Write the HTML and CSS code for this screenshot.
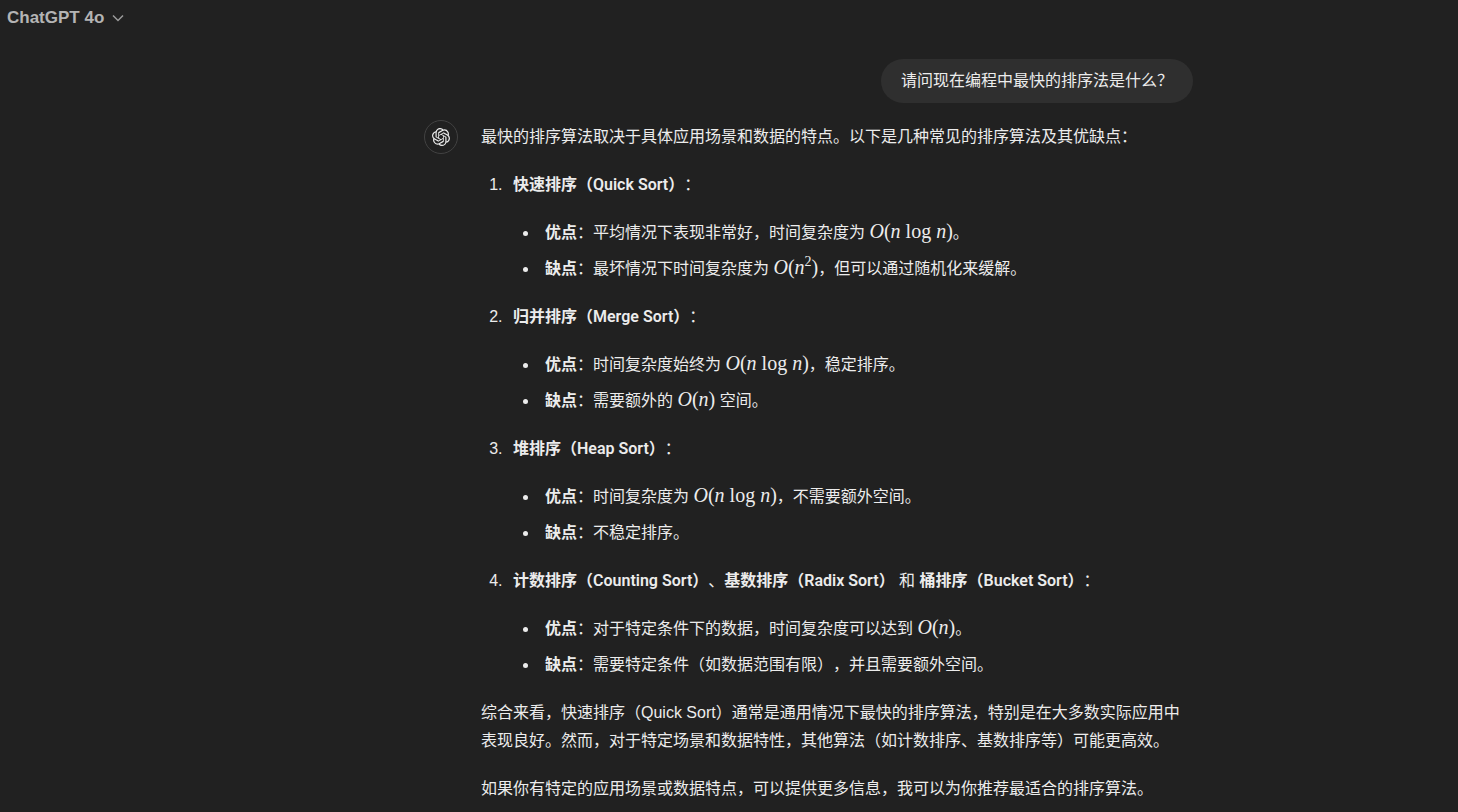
FILE: index.html
```html
<!DOCTYPE html>
<html lang="zh-CN">
<head>
    <meta charset="UTF-8">
    <meta name="viewport" content="width=device-width, initial-scale=1.0">
    <title>ChatGPT</title>
    <link rel="stylesheet" href="styles.css">
</head>
<body>
    <header class="topbar">
        <button type="button" class="model-button">
            ChatGPT 4o
            <svg class="chevron" viewBox="0 0 12 12" aria-hidden="true"><path d="M1 3.5L6 8.5L11 3.5"/></svg>
        </button>
    </header>

    <main class="chat">
        <div class="user-row">
            <div class="bubble">请问现在编程中最快的排序法是什么？</div>
        </div>

        <div class="answer">
            <div class="avatar">
                <svg viewBox="0 0 24 24" aria-hidden="true"><path d="M22.2819 9.8211a5.9847 5.9847 0 0 0-.5157-4.9108 6.0462 6.0462 0 0 0-6.5098-2.9A6.0651 6.0651 0 0 0 4.9807 4.1818a5.9847 5.9847 0 0 0-3.9977 2.9 6.0462 6.0462 0 0 0 .7427 7.0966 5.98 5.98 0 0 0 .511 4.9107 6.051 6.051 0 0 0 6.5146 2.9001A5.9847 5.9847 0 0 0 13.2599 24a6.0557 6.0557 0 0 0 5.7718-4.2058 5.9894 5.9894 0 0 0 3.9977-2.9001 6.0557 6.0557 0 0 0-.7475-7.0729zm-9.022 12.6081a4.4755 4.4755 0 0 1-2.8764-1.0408l.1419-.0804 4.7783-2.7582a.7948.7948 0 0 0 .3927-.6813v-6.7369l2.02 1.1686a.071.071 0 0 1 .038.052v5.5826a4.504 4.504 0 0 1-4.4945 4.4944zm-9.6607-4.1254a4.4708 4.4708 0 0 1-.5346-3.0137l.142.0852 4.783 2.7582a.7712.7712 0 0 0 .7806 0l5.8428-3.3685v2.3324a.0804.0804 0 0 1-.0332.0615L9.74 19.9502a4.4992 4.4992 0 0 1-6.1408-1.6464zM2.3408 7.8956a4.485 4.485 0 0 1 2.3655-1.9728V11.6a.7664.7664 0 0 0 .3879.6765l5.8144 3.3543-2.0201 1.1685a.0757.0757 0 0 1-.071 0l-4.8303-2.7865A4.504 4.504 0 0 1 2.3408 7.872zm16.5963 3.8558L13.1038 8.364 15.1192 7.2a.0757.0757 0 0 1 .071 0l4.8303 2.7913a4.4944 4.4944 0 0 1-.6765 8.1042v-5.6772a.79.79 0 0 0-.407-.667zm2.0107-3.0231l-.142-.0852-4.7735-2.7818a.7759.7759 0 0 0-.7854 0L9.409 9.2297V6.8974a.0662.0662 0 0 1 .0284-.0615l4.8303-2.7866a4.4992 4.4992 0 0 1 6.6802 4.66zM8.3065 12.863l-2.02-1.1638a.0804.0804 0 0 1-.038-.0567V6.0742a4.4992 4.4992 0 0 1 7.3757-3.4537l-.142.0805L8.704 5.459a.7948.7948 0 0 0-.3927.6813zm1.0976-2.3654l2.602-1.4998 2.6069 1.4998v2.9994l-2.5974 1.4997-2.6067-1.4997Z"/></svg>
            </div>
            <div class="markdown">
                <p>最快的排序算法取决于具体应用场景和数据的特点。以下是几种常见的排序算法及其优缺点：</p>
                <ol>
                    <li>
                        <p><strong>快速排序（Quick Sort）</strong>：</p>
                        <ul>
                            <li><strong>优点</strong>：平均情况下表现非常好，时间复杂度为 <span class="math"><i>O</i>(<i>n</i> log <i>n</i>)</span>。</li>
                            <li><strong>缺点</strong>：最坏情况下时间复杂度为 <span class="math"><i>O</i>(<i>n</i><sup>2</sup>)</span>，但可以通过随机化来缓解。</li>
                        </ul>
                    </li>
                    <li>
                        <p><strong>归并排序（Merge Sort）</strong>：</p>
                        <ul>
                            <li><strong>优点</strong>：时间复杂度始终为 <span class="math"><i>O</i>(<i>n</i> log <i>n</i>)</span>，稳定排序。</li>
                            <li><strong>缺点</strong>：需要额外的 <span class="math"><i>O</i>(<i>n</i>)</span> 空间。</li>
                        </ul>
                    </li>
                    <li>
                        <p><strong>堆排序（Heap Sort）</strong>：</p>
                        <ul>
                            <li><strong>优点</strong>：时间复杂度为 <span class="math"><i>O</i>(<i>n</i> log <i>n</i>)</span>，不需要额外空间。</li>
                            <li><strong>缺点</strong>：不稳定排序。</li>
                        </ul>
                    </li>
                    <li>
                        <p><strong>计数排序（Counting Sort）</strong>、<strong>基数排序（Radix Sort）</strong> 和 <strong>桶排序（Bucket Sort）</strong>：</p>
                        <ul>
                            <li><strong>优点</strong>：对于特定条件下的数据，时间复杂度可以达到 <span class="math"><i>O</i>(<i>n</i>)</span>。</li>
                            <li><strong>缺点</strong>：需要特定条件（如数据范围有限），并且需要额外空间。</li>
                        </ul>
                    </li>
                </ol>
                <p>综合来看，快速排序（Quick Sort）通常是通用情况下最快的排序算法，特别是在大多数实际应用中表现良好。然而，对于特定场景和数据特性，其他算法（如计数排序、基数排序等）可能更高效。</p>
                <p>如果你有特定的应用场景或数据特点，可以提供更多信息，我可以为你推荐最适合的排序算法。</p>
            </div>
        </div>
    </main>
</body>
</html>
```
FILE: styles.css
```css
* {
    box-sizing: border-box;
}

body {
    margin: 0;
    background-color: #212121;
    color: #ececec;
    font-family: "Liberation Sans", "Noto Sans CJK SC", sans-serif;
    font-size: 16px;
    line-height: 28px;
    text-spacing-trim: space-all;
}

.topbar {
    display: flex;
    align-items: center;
    height: 36px;
    padding: 0 7px;
}

.model-button {
    display: flex;
    align-items: center;
    gap: 8px;
    padding: 0;
    border: none;
    background: none;
    color: #b4b4b4;
    font-family: inherit;
    font-size: 17px;
    font-weight: 600;
    cursor: pointer;
}

.chevron {
    width: 12px;
    height: 12px;
    fill: none;
    stroke: #9b9b9b;
    stroke-width: 1.5;
}

.chat {
    max-width: 928px;
    margin: 0 auto;
    padding: 23px 0 8px 159px;
}

.user-row {
    display: flex;
    justify-content: flex-end;
}

.bubble {
    padding: 8px 20px;
    border-radius: 22px;
    background-color: #2f2f2f;
}

.answer {
    display: flex;
    gap: 23px;
    margin-top: 20px;
}

.avatar {
    display: flex;
    flex: none;
    align-items: center;
    justify-content: center;
    width: 34px;
    height: 34px;
    margin-top: -3px;
    border: 1px solid #424242;
    border-radius: 50%;
}

.avatar svg {
    width: 18px;
    height: 18px;
    fill: #ececec;
}

.markdown {
    flex: 1;
    min-width: 0;
}

.markdown p {
    margin: 0 0 20px;
}

.markdown p:last-child {
    margin-bottom: 0;
}

.markdown ol,
.markdown ul {
    margin: 0 0 20px;
    padding-left: 26px;
}

.markdown ul {
    list-style-type: disc;
}

.markdown li {
    padding-left: 6px;
}

.markdown ul li + li {
    margin-top: 8px;
}

strong {
    font-family: Roboto, "Noto Sans CJK SC", sans-serif;
    font-weight: 600;
}

/* formulas */
.math {
    font-family: "Liberation Serif", serif;
    font-size: 20px;
    line-height: 20px;
    white-space: nowrap;
}

.math sup {
    font-size: 14px;
    line-height: 0;
}
```
